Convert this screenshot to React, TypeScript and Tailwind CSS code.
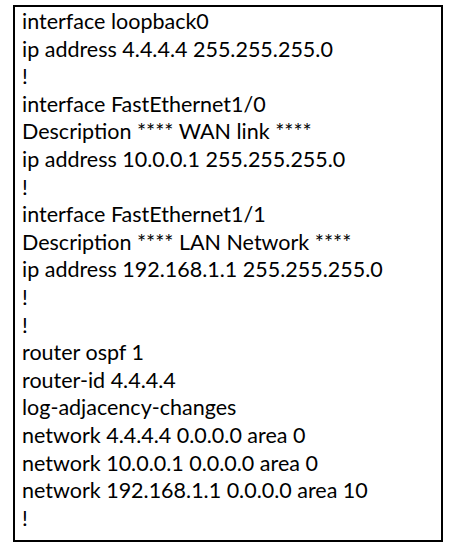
const LINES = [
  "interface loopback0",
  "ip address 4.4.4.4 255.255.255.0",
  "!",
  "interface FastEthernet1/0",
  "Description **** WAN link ****",
  "ip address 10.0.0.1 255.255.255.0",
  "!",
  "interface FastEthernet1/1",
  "Description **** LAN Network ****",
  "ip address 192.168.1.1 255.255.255.0",
  "!",
  "!",
  "router ospf 1",
  "router-id 4.4.4.4",
  "log-adjacency-changes",
  "network 4.4.4.4 0.0.0.0 area 0",
  "network 10.0.0.1 0.0.0.0 area 0",
  "network 192.168.1.1 0.0.0.0 area 10",
  "!",
];

export default function App() {
  return (
    <div className="w-[454px] h-[551px] bg-white pt-[5px] pl-[13px]">
      <div className="w-[430px] h-[537px] border-2 border-black pl-[7px] pt-[1px] font-['Lato',sans-serif] text-[21.5px] leading-[27.6px] text-black">
        {LINES.map((line, i) => (
          <div key={i} className="whitespace-pre">
            {line}
          </div>
        ))}
      </div>
    </div>
  );
}
